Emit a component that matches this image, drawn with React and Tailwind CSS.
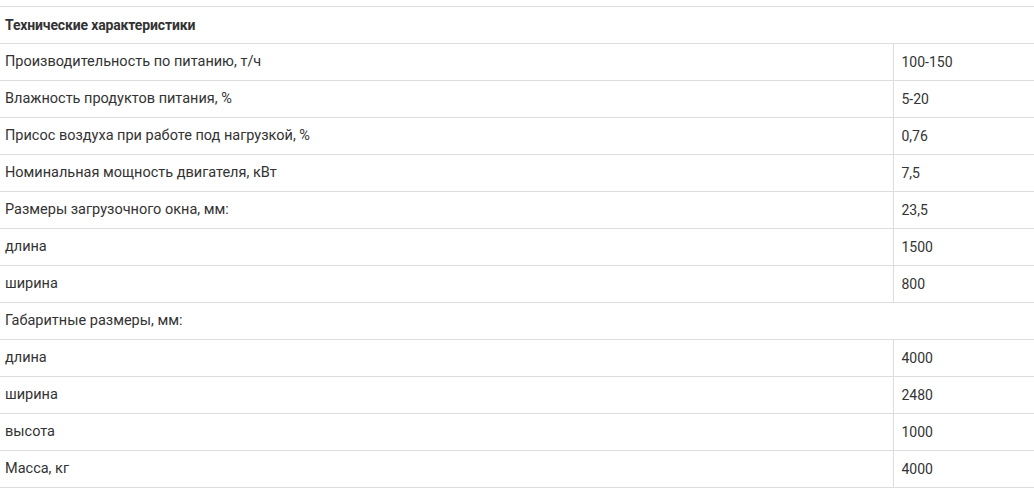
const rows = [
  ['Производительность по питанию, т/ч', '100-150'],
  ['Влажность продуктов питания, %', '5-20'],
  ['Присос воздуха при работе под нагрузкой, %', '0,76'],
  ['Номинальная мощность двигателя, кВт', '7,5'],
  ['Размеры загрузочного окна, мм:', '23,5'],
  ['длина', '1500'],
  ['ширина', '800'],
  ['Габаритные размеры, мм:', null],
  ['длина', '4000'],
  ['ширина', '2480'],
  ['высота', '1000'],
  ['Масса, кг', '4000'],
];

export default function App() {
  return (
    <div className="bg-white pt-[6px] font-['Roboto',sans-serif] text-[14px] text-[#333]">
      <table className="w-full border-collapse">
        <tbody>
          <tr className="h-[37px] border-y border-[#ddd]">
            <td colSpan={2} className="pl-[5px] font-bold text-[14px] tracking-[-0.15px]">Технические характеристики</td>
          </tr>
          {rows.map(([label, value], i) => (
            <tr key={i} className="h-[37px] border-b border-[#ddd]">
              {value === null ? (
                <td colSpan={2} className="pl-[5px] text-[14.5px]">{label}</td>
              ) : (
                <>
                  <td className="pl-[5px] w-[893px] border-r border-[#ddd] text-[14.5px]">{label}</td>
                  <td className="pl-[8px]">{value}</td>
                </>
              )}
            </tr>
          ))}
        </tbody>
      </table>
    </div>
  );
}
